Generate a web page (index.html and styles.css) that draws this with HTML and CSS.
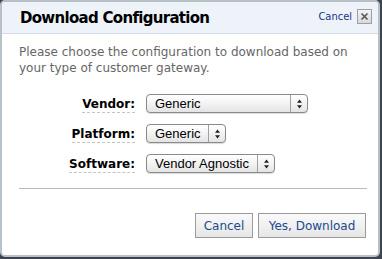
FILE: index.html
```html
<!DOCTYPE html>
<html>
<head>
<meta charset="utf-8">
<link rel="stylesheet" href="styles.css">
</head>
<body>
<div class="dialog">
  <div class="header">
    <h1 class="title">Download Configuration</h1>
    <div class="close-area">
      <a class="cancel-link">Cancel</a>
      <span class="close-btn"><svg width="9" height="9" viewBox="0 0 9 9"><path d="M1.5 1.5 L7.5 7.5 M7.5 1.5 L1.5 7.5" stroke="#555" stroke-width="1.6" fill="none"/></svg></span>
    </div>
  </div>
  <div class="content">
    <p class="intro">Please choose the configuration to download based on your type of customer gateway.</p>
    <div class="form">
      <div class="row">
        <span class="label"><span class="label-text">Vendor:</span></span>
        <div class="select w-vendor"><span class="value">Generic</span><span class="arrows"><svg width="7" height="10" viewBox="0 0 7 10"><path d="M3.5 0.5 L6 3.8 L1 3.8 Z M3.5 9.5 L6 6.2 L1 6.2 Z" fill="#222"/></svg></span></div>
      </div>
      <div class="row">
        <span class="label"><span class="label-text">Platform:</span></span>
        <div class="select w-platform"><span class="value">Generic</span><span class="arrows"><svg width="7" height="10" viewBox="0 0 7 10"><path d="M3.5 0.5 L6 3.8 L1 3.8 Z M3.5 9.5 L6 6.2 L1 6.2 Z" fill="#222"/></svg></span></div>
      </div>
      <div class="row">
        <span class="label"><span class="label-text">Software:</span></span>
        <div class="select w-software"><span class="value">Vendor Agnostic</span><span class="arrows"><svg width="7" height="10" viewBox="0 0 7 10"><path d="M3.5 0.5 L6 3.8 L1 3.8 Z M3.5 9.5 L6 6.2 L1 6.2 Z" fill="#222"/></svg></span></div>
      </div>
    </div>
    <div class="divider"></div>
    <div class="footer">
      <button class="btn btn-cancel">Cancel</button>
      <button class="btn btn-primary">Yes, Download</button>
    </div>
  </div>
</div>
</body>
</html>
```
FILE: styles.css
```css
html, body {
  margin: 0;
  padding: 0;
}
body {
  background: #3d4650;
  width: 382px;
  height: 259px;
  overflow: hidden;
}
.dialog {
  width: 376px;
  height: 253px;
  border: 2px solid #b8c0c8;
  border-radius: 5px;
  background: #fff;
  overflow: hidden;
  font-family: "DejaVu Sans", Verdana, sans-serif;
}
.header {
  height: 31px;
  background: #eef3fa;
  border-bottom: 1px solid #d3dbe5;
  display: flex;
  align-items: center;
  justify-content: space-between;
  padding: 0 6px 0 18px;
}
.title {
  margin: 0;
  font-size: 15px;
  letter-spacing: -0.7px;
  font-weight: bold;
  color: #000;
  padding-top: 1px;
}
.close-area {
  display: flex;
  align-items: center;
  gap: 5px;
  padding-bottom: 2px;
}
.cancel-link {
  font-family: "DejaVu Sans Condensed", "DejaVu Sans", sans-serif;
  font-size: 11px;
  color: #1f2f86;
}
.close-btn {
  width: 13px;
  height: 13px;
  border: 1px solid #9aa0a6;
  background: linear-gradient(#f4f4f4, #d8d8d8);
  display: flex;
  align-items: center;
  justify-content: center;
}
.content {
  padding: 10px 10px 0 17px;
}
.intro {
  margin: 0;
  font-size: 12px;
  line-height: 16px;
  color: #666;
  width: 340px;
}
.form {
  display: flex;
  flex-direction: column;
  gap: 11px;
  margin-top: 18px;
}
.row {
  display: flex;
  align-items: center;
  gap: 11px;
}
.label {
  width: 116px;
  display: flex;
  justify-content: flex-end;
  font-size: 12px;
  font-weight: bold;
  color: #000;
}
.label-text {
  border-bottom: 1px dashed #c4c4c4;
  padding-bottom: 1px;
  margin-top: 3px;
}
.select {
  height: 17px;
  border: 1px solid #8a8a8a;
  border-radius: 4px;
  background: linear-gradient(#ffffff, #f3f3f3 50%, #e4e4e4);
  display: flex;
  align-items: stretch;
  font-family: "Liberation Sans", Arial, sans-serif;
  font-size: 13px;
  color: #000;
  box-shadow: 0 1px 1px rgba(0,0,0,0.15);
}
.value {
  flex: 1;
  padding-left: 8px;
  line-height: 17px;
}
.arrows {
  width: 16px;
  border-left: 1px solid #a0a0a0;
  display: flex;
  align-items: center;
  justify-content: center;
}
.w-vendor { width: 160px; }
.w-platform { width: 78px; }
.w-software { width: 127px; }
.divider {
  height: 1px;
  background: #bbb;
  margin-top: 15px;
  margin-right: 1px;
}
.footer {
  display: flex;
  justify-content: flex-end;
  gap: 5px;
  margin-top: 24px;
  padding-right: 2px;
}
.btn {
  height: 25px;
  border: 1px solid #9a9a9a;
  background: linear-gradient(#fafafa, #e6e6e6);
  font-family: "DejaVu Sans", Verdana, sans-serif;
  font-size: 12px;
  color: #1c4a8c;
  padding: 0;
  border-radius: 0;
}
.btn-cancel { width: 58px; }
.btn-primary { width: 108px; }
```
